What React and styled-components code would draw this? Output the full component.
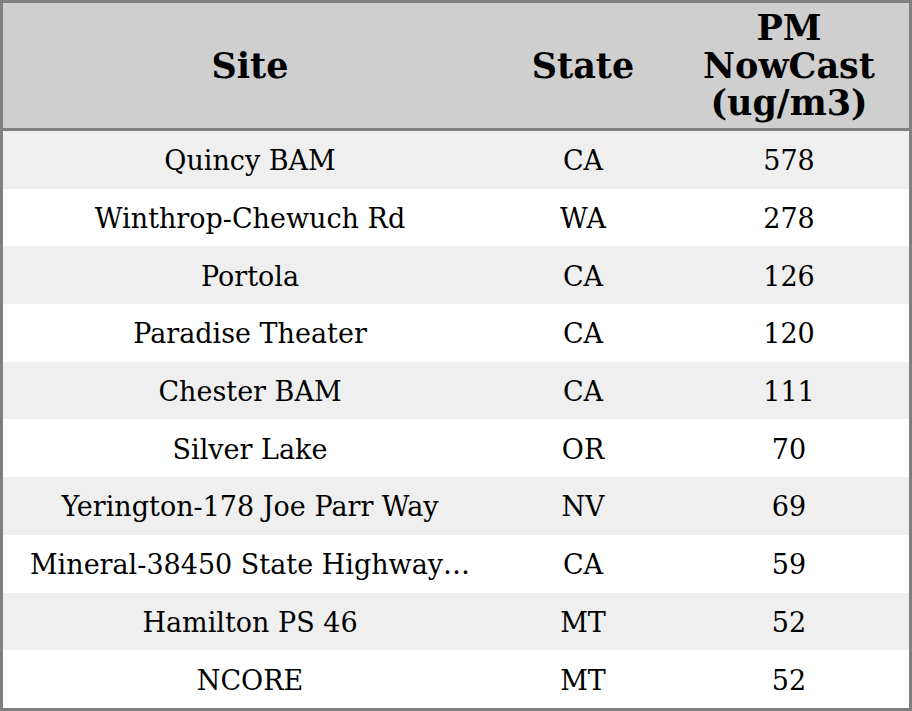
import React from "react";
import styled, { createGlobalStyle } from "styled-components";

const Global = createGlobalStyle`
  html, body { margin: 0; padding: 0; background: #ffffff; }
  body { font-family: "DejaVu Serif", "Liberation Serif", serif; color: #000; }
`;

const Table = styled.table`
  width: 912px;
  height: 711px;
  border: 3px solid #808080;
  border-spacing: 0;
  border-collapse: separate;
  table-layout: fixed;
  box-sizing: border-box;
`;

const HeadCell = styled.th`
  background: #cfcfcf;
  border-bottom: 3px solid #808080;
  font-size: 35px;
  font-weight: bold;
  line-height: 37.5px;
  height: 128px;
  padding: 0 4px;
  text-align: center;
  vertical-align: middle;
  box-sizing: border-box;
`;

const Row = styled.tr`
  background: ${(p) => (p.$odd ? "#efefef" : "#ffffff")};
`;

const Cell = styled.td`
  font-size: 27px;
  height: 57.7px;
  padding: 2px 6px 0;
  text-align: center;
  vertical-align: middle;
  white-space: nowrap;
  overflow: hidden;
  text-overflow: ellipsis;
  box-sizing: border-box;
`;

const rows = [
  ["Quincy BAM", "CA", "578"],
  ["Winthrop-Chewuch Rd", "WA", "278"],
  ["Portola", "CA", "126"],
  ["Paradise Theater", "CA", "120"],
  ["Chester BAM", "CA", "111"],
  ["Silver Lake", "OR", "70"],
  ["Yerington-178 Joe Parr Way", "NV", "69"],
  ["Mineral-38450 State Highway…", "CA", "59"],
  ["Hamilton PS 46", "MT", "52"],
  ["NCORE", "MT", "52"],
];

export default function App() {
  return (
    <>
      <Global />
      <Table>
        <colgroup>
          <col style={{ width: 494 }} />
          <col style={{ width: 172 }} />
          <col style={{ width: 240 }} />
        </colgroup>
        <thead>
          <tr>
            <HeadCell>Site</HeadCell>
            <HeadCell>State</HeadCell>
            <HeadCell>
              PM
              <br />
              NowCast
              <br />
              (ug/m3)
            </HeadCell>
          </tr>
        </thead>
        <tbody>
          {rows.map((r, i) => (
            <Row key={i} $odd={i % 2 === 0}>
              <Cell>{r[0]}</Cell>
              <Cell>{r[1]}</Cell>
              <Cell>{r[2]}</Cell>
            </Row>
          ))}
        </tbody>
      </Table>
    </>
  );
}
